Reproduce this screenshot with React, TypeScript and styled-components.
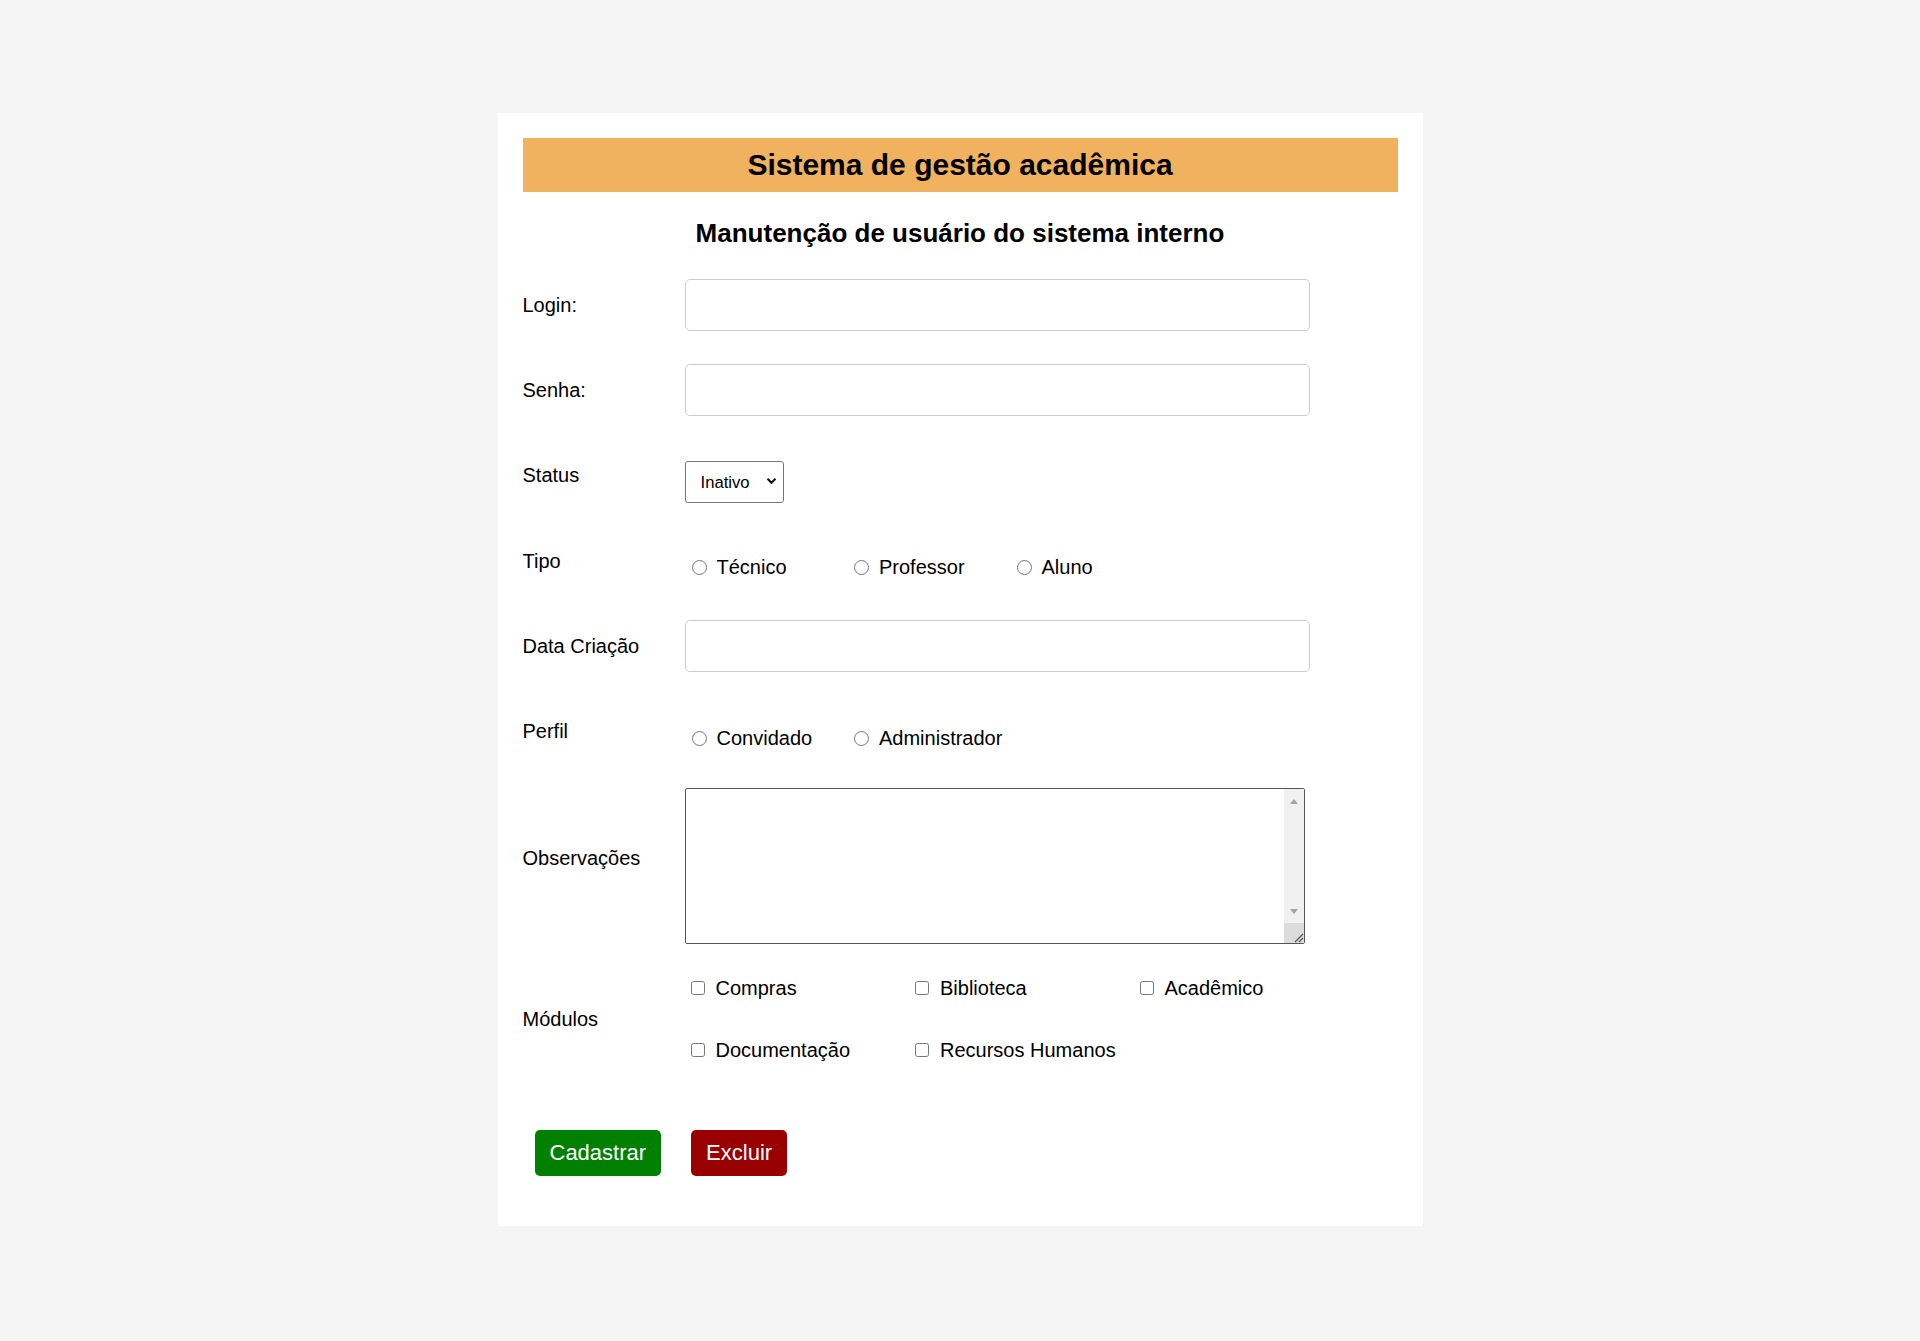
import React from 'react';
import styled, { createGlobalStyle } from 'styled-components';

const FONT = `"Liberation Sans", Arial, Helvetica, sans-serif`;

const Global = createGlobalStyle`
  html, body { margin: 0; padding: 0; background: #f5f5f5; }
  body { font-family: ${FONT}; color: #000; }
  * { box-sizing: border-box; }
`;

const Page = styled.div`
  padding-top: 113px;
  padding-bottom: 100px;
`;

const Card = styled.main`
  width: 925px;
  margin: 0 auto;
  background: #ffffff;
  padding: 25px 25px 50px;
`;

const Banner = styled.header`
  height: 54px;
  background: #f0b25e;
  display: flex;
  align-items: center;
  justify-content: center;
`;

const Title = styled.h1`
  margin: 0;
  font-size: 30px;
  line-height: 54px;
  font-weight: 700;
`;

const Subtitle = styled.h2`
  margin: 26px 0 0;
  font-size: 26px;
  line-height: 30px;
  font-weight: 700;
  text-align: center;
`;

const Form = styled.form`
  margin-top: 31px;
  display: flex;
  flex-direction: column;
`;

const Row = styled.div<{ $mt?: number }>`
  display: grid;
  grid-template-columns: 162px 1fr;
  align-items: center;
  margin-top: ${(p) => p.$mt ?? 0}px;
`;

const Label = styled.label`
  font-size: 20px;
  line-height: 24px;
`;

const Field = styled.div<{ $shift?: number }>`
  padding-top: ${(p) => p.$shift ?? 0}px;
  display: flex;
  flex-direction: column;
  align-items: flex-start;
`;

const TextInput = styled.input`
  width: 625px;
  height: 52px;
  margin: 0;
  padding: 0 12px;
  border: 1px solid #cccccc;
  border-radius: 5px;
  background: #fff;
  font: 20px ${FONT};
  outline: none;
`;

const SelectWrap = styled.div`
  position: relative;
  width: 99px;
  height: 42px;
`;

const Select = styled.select`
  appearance: none;
  -webkit-appearance: none;
  width: 100%;
  height: 100%;
  margin: 0;
  padding: 0 0 0 15px;
  border: 1px solid #767676;
  border-radius: 3px;
  background: #fff;
  color: #000;
  font-family: ${FONT};
  font-size: 16.67px;
`;

const Chevron = styled.svg`
  position: absolute;
  right: 7px;
  top: 16px;
  pointer-events: none;
`;

const OptionRow = styled.div`
  display: flex;
  height: 24px;
  align-items: center;
`;

const Option = styled.label<{ $w: number }>`
  width: ${(p) => p.$w}px;
  flex-shrink: 0;
  display: inline-flex;
  align-items: center;
  font-size: 20px;
  line-height: 24px;
`;

const Radio = styled.input.attrs({ type: 'radio' })`
  width: 15px;
  height: 15px;
  margin: 0 10px 0 7px;
`;

const Check = styled.input.attrs({ type: 'checkbox' })`
  width: 14px;
  height: 14px;
  margin: 0 11px 0 6px;
`;

const ChecksGrid = styled.div`
  display: grid;
  grid-template-columns: repeat(3, 224.5px);
  grid-auto-rows: 24px;
  row-gap: 38px;
`;

const NotesBox = styled.div`
  position: relative;
  width: 620px;
  height: 156px;
`;

const Notes = styled.textarea`
  display: block;
  width: 100%;
  height: 100%;
  margin: 0;
  padding: 3px 24px 3px 4px;
  border: 1px solid #555555;
  border-radius: 2px;
  resize: none;
  overflow: hidden;
  font: 16px ${FONT};
  outline: none;
`;

const FakeScroll = styled.div`
  position: absolute;
  top: 1px;
  right: 1px;
  bottom: 1px;
  width: 20px;
  background: #f1f1f1;
  display: flex;
  flex-direction: column;
  align-items: stretch;
`;

const ArrowBtn = styled.div`
  height: 24px;
  display: flex;
  align-items: center;
  justify-content: center;
`;

const Track = styled.div`
  flex: 1;
`;

const Tri = styled.span<{ $dir: 'up' | 'down' }>`
  width: 0;
  height: 0;
  border-left: 4.5px solid transparent;
  border-right: 4.5px solid transparent;
  ${(p) =>
    p.$dir === 'up'
      ? 'border-bottom: 5px solid #a3a3a3;'
      : 'border-top: 5px solid #a3a3a3;'}
`;

const Corner = styled.div`
  height: 20px;
  background: #dcdcdc;
  display: flex;
  align-items: flex-end;
  justify-content: flex-end;
`;

const Actions = styled.div`
  display: flex;
  gap: 30px;
  margin: 68px 0 0 12px;
`;

const Button = styled.button<{ $tone: 'green' | 'red' }>`
  height: 46px;
  padding: 0 15px;
  border: none;
  border-radius: 5px;
  background: ${(p) => (p.$tone === 'green' ? '#008000' : '#990000')};
  color: #fff;
  font: 22px ${FONT};
  cursor: pointer;
`;

const tipos = ['Técnico', 'Professor', 'Aluno'];
const perfis = ['Convidado', 'Administrador'];
const modulos = ['Compras', 'Biblioteca', 'Acadêmico', 'Documentação', 'Recursos Humanos'];

export default function App() {
  return (
    <>
      <Global />
      <Page>
        <Card>
          <Banner>
            <Title>Sistema de gestão acadêmica</Title>
          </Banner>
          <Subtitle>Manutenção de usuário do sistema interno</Subtitle>
          <Form onSubmit={(e) => e.preventDefault()}>
            <Row>
              <Label htmlFor="login">Login:</Label>
              <Field>
                <TextInput id="login" type="text" />
              </Field>
            </Row>
            <Row $mt={33}>
              <Label htmlFor="senha">Senha:</Label>
              <Field>
                <TextInput id="senha" type="password" />
              </Field>
            </Row>
            <Row $mt={31}>
              <Label htmlFor="status">Status</Label>
              <Field $shift={14}>
                <SelectWrap>
                  <Select id="status" defaultValue="inativo">
                    <option value="ativo">Ativo</option>
                    <option value="inativo">Inativo</option>
                  </Select>
                  <Chevron width="11" height="8" viewBox="0 0 11 8">
                    <path d="M1.5 1.8 L5.5 5.8 L9.5 1.8" stroke="#111" strokeWidth="2" fill="none" />
                  </Chevron>
                </SelectWrap>
              </Field>
            </Row>
            <Row $mt={40}>
              <Label>Tipo</Label>
              <Field $shift={12}>
                <OptionRow>
                  {tipos.map((t) => (
                    <Option key={t} $w={162.5}>
                      <Radio name="tipo" value={t} />
                      {t}
                    </Option>
                  ))}
                </OptionRow>
              </Field>
            </Row>
            <Row $mt={41}>
              <Label htmlFor="data">Data Criação</Label>
              <Field>
                <TextInput id="data" type="text" />
              </Field>
            </Row>
            <Row $mt={40}>
              <Label>Perfil</Label>
              <Field $shift={14}>
                <OptionRow>
                  {perfis.map((t) => (
                    <Option key={t} $w={162.5}>
                      <Radio name="perfil" value={t} />
                      {t}
                    </Option>
                  ))}
                </OptionRow>
              </Field>
            </Row>
            <Row $mt={22}>
              <Label htmlFor="obs">Observações</Label>
              <Field $shift={16}>
                <NotesBox>
                  <Notes id="obs" />
                  <FakeScroll aria-hidden="true">
                    <ArrowBtn>
                      <Tri $dir="up" />
                    </ArrowBtn>
                    <Track />
                    <ArrowBtn>
                      <Tri $dir="down" />
                    </ArrowBtn>
                    <Corner>
                      <svg width="12" height="12" viewBox="0 0 12 12">
                        <path d="M11 3 L3 11 M11 7 L7 11" stroke="#555" strokeWidth="1.2" fill="none" />
                      </svg>
                    </Corner>
                  </FakeScroll>
                </NotesBox>
              </Field>
            </Row>
            <Row $mt={32}>
              <Label>Módulos</Label>
              <Field>
                <ChecksGrid>
                  {modulos.map((m) => (
                    <Option key={m} $w={224.5}>
                      <Check value={m} />
                      {m}
                    </Option>
                  ))}
                </ChecksGrid>
              </Field>
            </Row>
            <Actions>
              <Button type="submit" $tone="green">Cadastrar</Button>
              <Button type="button" $tone="red">Excluir</Button>
            </Actions>
          </Form>
        </Card>
      </Page>
    </>
  );
}
